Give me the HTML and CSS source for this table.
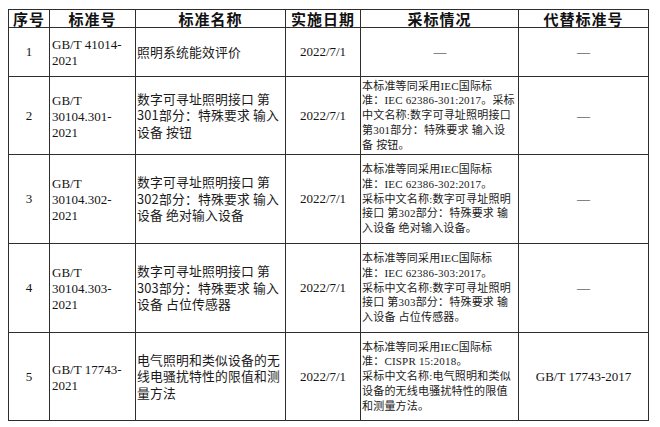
FILE: index.html
```html
<!DOCTYPE html>
<html lang="zh-CN">
<head>
<meta charset="utf-8">
<title>标准列表</title>
<link rel="stylesheet" href="styles.css">
</head>
<body>
<div class="sheet">
  <div class="cell head">序号</div>
  <div class="cell head">标准号</div>
  <div class="cell head">标准名称</div>
  <div class="cell head">实施日期</div>
  <div class="cell head">采标情况</div>
  <div class="cell head">代替标准号</div>

  <div class="cell num">1</div>
  <div class="cell code">GB/T 41014-<br>2021</div>
  <div class="cell name">照明系统能效评价</div>
  <div class="cell date">2022/7/1</div>
  <div class="cell adopt center">—</div>
  <div class="cell repl">—</div>

  <div class="cell num">2</div>
  <div class="cell code">GB/T<br>30104.301-<br>2021</div>
  <div class="cell name">数字可寻址照明接口 第<br>301部分：特殊要求 输入<br>设备 按钮</div>
  <div class="cell date">2022/7/1</div>
  <div class="cell adopt">本标准等同采用IEC国际标<br>准：IEC 62386-301:2017。采标<br>中文名称:数字可寻址照明接口<br>第301部分：特殊要求 输入设<br>备 按钮。</div>
  <div class="cell repl">—</div>

  <div class="cell num">3</div>
  <div class="cell code">GB/T<br>30104.302-<br>2021</div>
  <div class="cell name">数字可寻址照明接口 第<br>302部分：特殊要求 输入<br>设备 绝对输入设备</div>
  <div class="cell date">2022/7/1</div>
  <div class="cell adopt">本标准等同采用IEC国际标<br>准：IEC 62386-302:2017。<br>采标中文名称:数字可寻址照明<br>接口 第302部分：特殊要求 输<br>入设备 绝对输入设备。</div>
  <div class="cell repl">—</div>

  <div class="cell num">4</div>
  <div class="cell code">GB/T<br>30104.303-<br>2021</div>
  <div class="cell name">数字可寻址照明接口 第<br>303部分：特殊要求 输入<br>设备 占位传感器</div>
  <div class="cell date">2022/7/1</div>
  <div class="cell adopt">本标准等同采用IEC国际标<br>准：IEC 62386-303:2017。<br>采标中文名称:数字可寻址照明<br>接口 第303部分：特殊要求 输<br>入设备 占位传感器。</div>
  <div class="cell repl">—</div>

  <div class="cell num">5</div>
  <div class="cell code">GB/T 17743-<br>2021</div>
  <div class="cell name">电气照明和类似设备的无<br>线电骚扰特性的限值和测<br>量方法</div>
  <div class="cell date">2022/7/1</div>
  <div class="cell adopt">本标准等同采用IEC国际标<br>准：CISPR 15:2018。<br>采标中文名称:电气照明和类似<br>设备的无线电骚扰特性的限值<br>和测量方法。</div>
  <div class="cell repl">GB/T 17743-2017</div>
</div>
</body>
</html>
```
FILE: styles.css
```css
html, body {
  margin: 0;
  padding: 0;
  background: #ffffff;
}

body {
  padding: 9px 0 0 8px;
  font-family: "Liberation Serif", "Noto Sans CJK SC", serif;
  color: #141414;
}

.sheet {
  display: grid;
  grid-template-columns: 40px 85px 149px 74px 157px 129px;
  grid-template-rows: 17px 48px 77px 88px 88px 87px;
  gap: 1px;
  padding: 1px;
  width: max-content;
  background: #2e2e2e;
}

.cell {
  background: #ffffff;
  display: flex;
  flex-direction: column;
  justify-content: center;
  white-space: nowrap;
  overflow: visible;
  font-size: 13px;
  line-height: 16px;
}

.head {
  align-items: center;
  font-family: "Noto Sans CJK SC", sans-serif;
  font-weight: 700;
  font-size: 15px;
  line-height: 17px;
  letter-spacing: 1px;
  color: #111111;
}

.num,
.date,
.repl,
.center {
  align-items: center;
  text-align: center;
}

.code {
  padding-left: 2px;
  padding-top: 2px;
}

.name {
  padding-left: 1px;
  font-family: "Noto Sans CJK SC", sans-serif;
  font-size: 12.8px;
  line-height: 16.5px;
  letter-spacing: 0.2px;
  color: #1a1a1a;
}

.adopt {
  padding-left: 1px;
  font-size: 11px;
  line-height: 14.8px;
  letter-spacing: 0.2px;
  color: #1a1a1a;
}

.adopt.center {
  font-size: 13px;
  letter-spacing: 0;
}
```
